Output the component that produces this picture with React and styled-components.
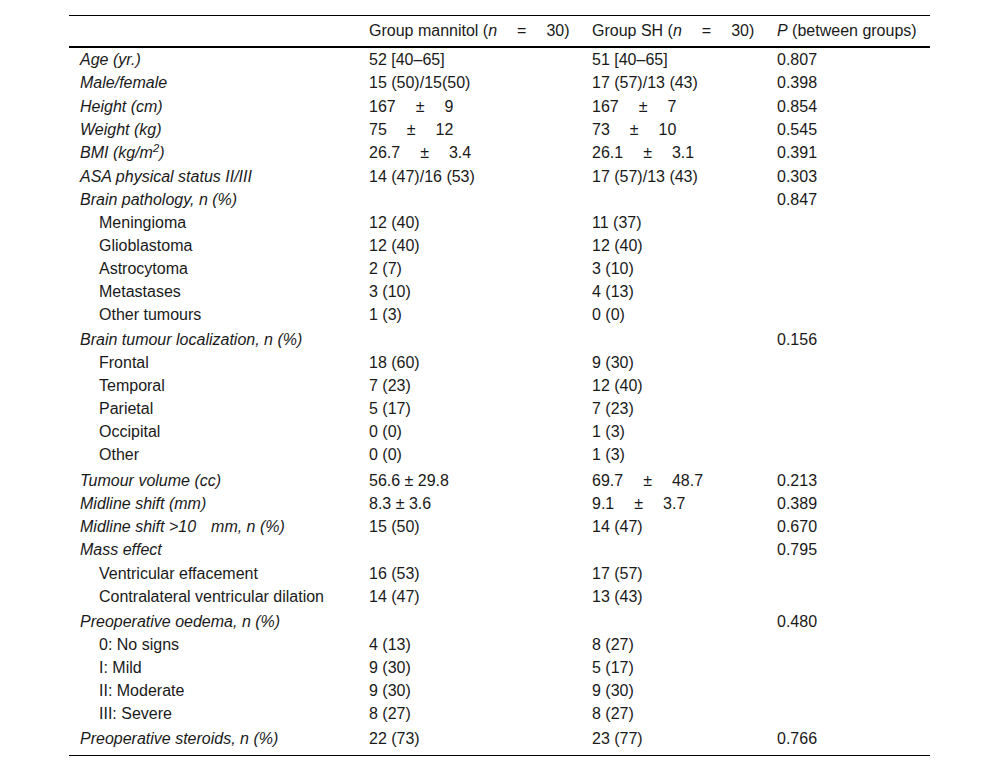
import React from 'react'
import styled, { createGlobalStyle } from 'styled-components'

const GlobalStyle = createGlobalStyle`
  body {
    margin: 0;
    background: #fff;
    color: #1a1a1a;
    font-family: "Liberation Sans", Arial, sans-serif;
    font-size: 16px;
  }
`

const Page = styled.div`
  padding: 15px 70px 0 69px;
`

const Table = styled.div`
  width: 861px;
  border-top: 1px solid #000;
  border-bottom: 1px solid #000;
`

const HeadRow = styled.div`
  display: grid;
  grid-template-columns: 289px 223px 185px 1fr;
  padding-left: 11px;
  height: 30px;
  align-items: center;
  border-bottom: 2px solid #000;
`

const Body = styled.div`
  display: flex;
  flex-direction: column;
  padding-bottom: 5px;
`

const Row = styled.div`
  display: grid;
  grid-template-columns: 289px 223px 185px 1fr;
  align-items: center;
  padding-left: 11px;
  height: ${(p) => (p.$sub ? '23px' : '23.3px')};
  line-height: 23px;
  margin-top: ${(p) => (p.$spaced ? '2px' : '0')};
`

const Cell = styled.div`
  white-space: nowrap;
`

const Label = styled(Cell)`
  font-style: ${(p) => (p.$sub ? 'normal' : 'italic')};
  padding-left: ${(p) => (p.$sub ? '19px' : '0')};

  sup {
    font-size: 0.7em;
    line-height: 0;
  }
`

const Op = styled.span`
  margin: 0 20px;
`

const Gap = styled.span`
  display: inline-block;
  width: 15px;
`

// wide-spaced operator as it shows in the source table
const Spaced = ({ op, left, right }) => (
  <>
    {left}
    <Op>{op}</Op>
    {right}
  </>
)

const pm = (l, r) => <Spaced op="±" left={l} right={r} />

const rows = [
  { label: 'Age (yr.)', a: '52 [40–65]', b: '51 [40–65]', p: '0.807' },
  { label: 'Male/female', a: '15 (50)/15(50)', b: '17 (57)/13 (43)', p: '0.398' },
  { label: 'Height (cm)', a: pm('167', '9'), b: pm('167', '7'), p: '0.854' },
  { label: 'Weight (kg)', a: pm('75', '12'), b: pm('73', '10'), p: '0.545' },
  { label: <>BMI (kg/m<sup>2</sup>)</>, a: pm('26.7', '3.4'), b: pm('26.1', '3.1'), p: '0.391' },
  { label: 'ASA physical status II/III', a: '14 (47)/16 (53)', b: '17 (57)/13 (43)', p: '0.303' },
  { label: 'Brain pathology, n (%)', p: '0.847' },
  { label: 'Meningioma', sub: true, a: '12 (40)', b: '11 (37)' },
  { label: 'Glioblastoma', sub: true, a: '12 (40)', b: '12 (40)' },
  { label: 'Astrocytoma', sub: true, a: '2 (7)', b: '3 (10)' },
  { label: 'Metastases', sub: true, a: '3 (10)', b: '4 (13)' },
  { label: 'Other tumours', sub: true, a: '1 (3)', b: '0 (0)' },
  { label: 'Brain tumour localization, n (%)', p: '0.156' },
  { label: 'Frontal', sub: true, a: '18 (60)', b: '9 (30)' },
  { label: 'Temporal', sub: true, a: '7 (23)', b: '12 (40)' },
  { label: 'Parietal', sub: true, a: '5 (17)', b: '7 (23)' },
  { label: 'Occipital', sub: true, a: '0 (0)', b: '1 (3)' },
  { label: 'Other', sub: true, a: '0 (0)', b: '1 (3)' },
  { label: 'Tumour volume (cc)', a: '56.6 ± 29.8', b: pm('69.7', '48.7'), p: '0.213' },
  { label: 'Midline shift (mm)', a: '8.3 ± 3.6', b: pm('9.1', '3.7'), p: '0.389' },
  { label: <>Midline shift &gt;10<Gap />mm, n (%)</>, a: '15 (50)', b: '14 (47)', p: '0.670' },
  { label: 'Mass effect', p: '0.795' },
  { label: 'Ventricular effacement', sub: true, a: '16 (53)', b: '17 (57)' },
  { label: 'Contralateral ventricular dilation', sub: true, a: '14 (47)', b: '13 (43)' },
  { label: 'Preoperative oedema, n (%)', p: '0.480' },
  { label: '0: No signs', sub: true, a: '4 (13)', b: '8 (27)' },
  { label: 'I: Mild', sub: true, a: '9 (30)', b: '5 (17)' },
  { label: 'II: Moderate', sub: true, a: '9 (30)', b: '9 (30)' },
  { label: 'III: Severe', sub: true, a: '8 (27)', b: '8 (27)' },
  { label: 'Preoperative steroids, n (%)', a: '22 (73)', b: '23 (77)', p: '0.766' },
]

function App() {
  return (
    <>
      <GlobalStyle />
      <Page>
        <Table>
          <HeadRow>
            <Cell />
            <Cell>
              Group mannitol (<i>n</i>
              <Op>=</Op>30)
            </Cell>
            <Cell>
              Group SH (<i>n</i>
              <Op>=</Op>30)
            </Cell>
            <Cell>
              <i>P</i> (between groups)
            </Cell>
          </HeadRow>
          <Body>
            {rows.map((r, i) => {
              const prev = rows[i - 1]
              const spaced = !r.sub && prev && prev.sub
              return (
                <Row key={i} $sub={r.sub} $spaced={spaced}>
                  <Label $sub={r.sub}>{r.label}</Label>
                  <Cell>{r.a}</Cell>
                  <Cell>{r.b}</Cell>
                  <Cell>{r.p}</Cell>
                </Row>
              )
            })}
          </Body>
        </Table>
      </Page>
    </>
  )
}

export default App
